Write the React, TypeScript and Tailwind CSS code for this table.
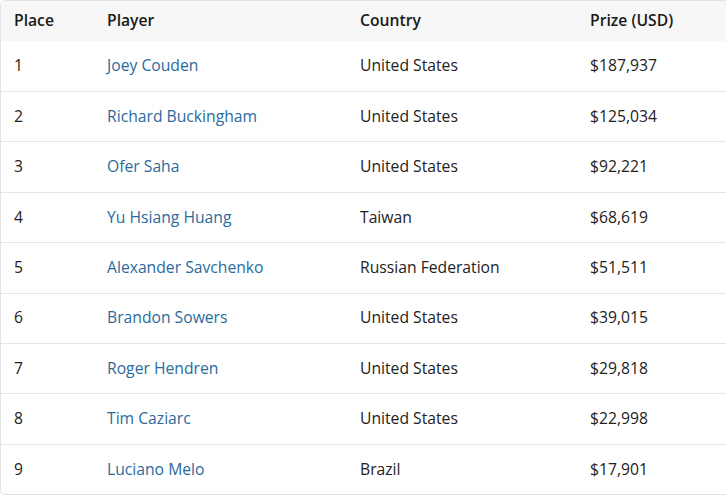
const rows = [
  { place: 1, player: "Joey Couden", country: "United States", prize: "$187,937" },
  { place: 2, player: "Richard Buckingham", country: "United States", prize: "$125,034" },
  { place: 3, player: "Ofer Saha", country: "United States", prize: "$92,221" },
  { place: 4, player: "Yu Hsiang Huang", country: "Taiwan", prize: "$68,619" },
  { place: 5, player: "Alexander Savchenko", country: "Russian Federation", prize: "$51,511" },
  { place: 6, player: "Brandon Sowers", country: "United States", prize: "$39,015" },
  { place: 7, player: "Roger Hendren", country: "United States", prize: "$29,818" },
  { place: 8, player: "Tim Caziarc", country: "United States", prize: "$22,998" },
  { place: 9, player: "Luciano Melo", country: "Brazil", prize: "$17,901" },
];

const cols = "grid grid-cols-[93px_253px_230px_1fr]";

export default function App() {
  return (
    <div className="w-[726px] h-[496px] overflow-hidden bg-white font-['Open_Sans',sans-serif] text-[15.7px] text-[#222]">
      <div className="w-[740px] border border-[#e3e3e3] rounded-[5px] overflow-hidden">
        {/* Header */}
        <div className={`${cols} h-[39.6px] items-center bg-[#f7f7f7] font-semibold text-[#1a1a1a]`}>
          <div className="pl-[13px]">Place</div>
          <div className="pl-[13px]">Player</div>
          <div className="pl-[13px]">Country</div>
          <div className="pl-[13px]">Prize (USD)</div>
        </div>

        {rows.map((r, i) => (
          <div
            key={r.place}
            className={`${cols} h-[50.4px] items-center ${i > 0 ? "border-t border-[#e5e5e5]" : ""}`}
          >
            <div className="pl-[13px]">{r.place}</div>
            <div className="pl-[13px]">
              <a href="#" className="text-[#2a6b9c]">
                {r.player}
              </a>
            </div>
            <div className="pl-[13px]">{r.country}</div>
            <div className="pl-[13px]">{r.prize}</div>
          </div>
        ))}
      </div>
    </div>
  );
}
